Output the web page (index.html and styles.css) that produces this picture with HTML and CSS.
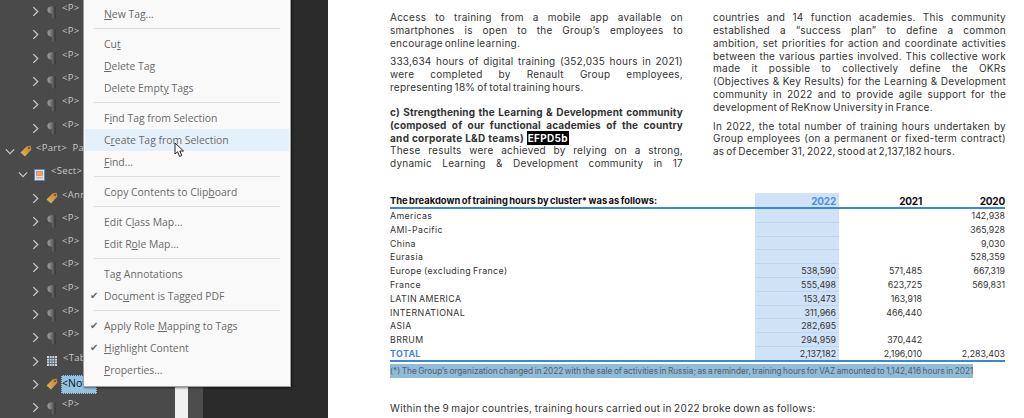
FILE: index.html
```html
<!DOCTYPE html>
<html lang="en">
<head>
    <meta charset="UTF-8">
    <title>Tags panel</title>
    <link rel="stylesheet" href="styles.css">
</head>
<body>
    <svg class="defs" width="0" height="0">
        <defs>
            <linearGradient id="stump" x1="0" x2="1" y1="0" y2="0">
                <stop offset="0" stop-color="#a0a0a0"/>
                <stop offset="0.55" stop-color="#6e6e6e"/>
                <stop offset="1" stop-color="#333"/>
            </linearGradient>
            <linearGradient id="tagfill" x1="0" x2="1" y1="1" y2="0">
                <stop offset="0" stop-color="#e9b65c"/>
                <stop offset="1" stop-color="#b9802c"/>
            </linearGradient>
            <symbol id="right" viewBox="0 0 8 12"><path d="M1.5 1 L6.5 6 L1.5 11" fill="none" stroke="#c8c8c8" stroke-width="1.5"/></symbol>
            <symbol id="down" viewBox="0 0 12 8"><path d="M1 1.5 L6 6.5 L11 1.5" fill="none" stroke="#c8c8c8" stroke-width="1.5"/></symbol>
            <symbol id="para" viewBox="0 0 10 14"><path d="M0.5 4.5 C0.5 1.5 3 0.5 5.5 0.5 L9.5 0.5 L9.5 14 L5.5 14 L5.5 9 C2.5 9 0.5 7.5 0.5 4.5 Z" fill="url(#stump)"/></symbol>
            <symbol id="tag" viewBox="0 0 12 12"><path d="M0.5 7.5 L6.5 1.5 L10.5 0.5 L11.5 4.5 L5 11.5 Z" fill="url(#tagfill)"/><circle cx="9" cy="3" r="0.9" fill="#5b4a2a"/></symbol>
            <symbol id="sect" viewBox="0 0 12 13"><rect x="0.5" y="0.5" width="11" height="12" fill="#d8e6f2" stroke="#4a8fd0"/><rect x="2.5" y="2.5" width="7" height="4.5" fill="#f0a070" stroke="#d8703a" stroke-width="0.6"/><rect x="2.5" y="8.5" width="7" height="2" fill="#e8b090"/></symbol>
            <symbol id="grid" viewBox="0 0 10 10"><rect width="10" height="10" fill="#c8d4de"/><path d="M0 2.5H10M0 5H10M0 7.5H10M2.5 0V10M5 0V10M7.5 0V10" stroke="#54606a" stroke-width="0.8"/></symbol>
        </defs>
    </svg>

    <div class="sidebar">
        <div class="tree">
            <div class="row deep"><svg class="chev"><use href="#right"/></svg><svg class="ico"><use href="#para"/></svg><span class="lbl">&lt;P&gt;</span></div>
            <div class="row deep"><svg class="chev"><use href="#right"/></svg><svg class="ico"><use href="#para"/></svg><span class="lbl">&lt;P&gt;</span></div>
            <div class="row deep"><svg class="chev"><use href="#right"/></svg><svg class="ico"><use href="#para"/></svg><span class="lbl">&lt;P&gt;</span></div>
            <div class="row deep"><svg class="chev"><use href="#right"/></svg><svg class="ico"><use href="#para"/></svg><span class="lbl">&lt;P&gt;</span></div>
            <div class="row deep"><svg class="chev"><use href="#right"/></svg><svg class="ico"><use href="#para"/></svg><span class="lbl">&lt;P&gt;</span></div>
            <div class="row deep"><svg class="chev"><use href="#right"/></svg><svg class="ico"><use href="#para"/></svg><span class="lbl">&lt;P&gt;</span></div>
            <div class="row top"><svg class="chev-d"><use href="#down"/></svg><svg class="tagico"><use href="#tag"/></svg><span class="lbl">&lt;Part&gt;&nbsp; Pag</span></div>
            <div class="row mid"><svg class="chev-d"><use href="#down"/></svg><svg class="sectico"><use href="#sect"/></svg><span class="lbl">&lt;Sect&gt; 2</span></div>
            <div class="row deep"><svg class="chev"><use href="#right"/></svg><svg class="tagico"><use href="#tag"/></svg><span class="lbl">&lt;Ann</span></div>
            <div class="row deep"><svg class="chev"><use href="#right"/></svg><svg class="ico"><use href="#para"/></svg><span class="lbl">&lt;P&gt;</span></div>
            <div class="row deep"><svg class="chev"><use href="#right"/></svg><svg class="ico"><use href="#para"/></svg><span class="lbl">&lt;P&gt;</span></div>
            <div class="row deep"><svg class="chev"><use href="#right"/></svg><svg class="ico"><use href="#para"/></svg><span class="lbl">&lt;P&gt;</span></div>
            <div class="row deep"><svg class="chev"><use href="#right"/></svg><svg class="ico"><use href="#para"/></svg><span class="lbl">&lt;P&gt;</span></div>
            <div class="row deep"><svg class="chev"><use href="#right"/></svg><svg class="ico"><use href="#para"/></svg><span class="lbl">&lt;P&gt;</span></div>
            <div class="row deep"><svg class="chev"><use href="#right"/></svg><svg class="ico"><use href="#para"/></svg><span class="lbl">&lt;P&gt;</span></div>
            <div class="row deep"><svg class="chev"><use href="#right"/></svg><svg class="gridico"><use href="#grid"/></svg><span class="lbl">&lt;Tab</span></div>
            <div class="row deep"><svg class="chev"><use href="#right"/></svg><svg class="tagico"><use href="#tag"/></svg><span class="lbl selected">&lt;Not</span></div>
            <div class="row deep"><svg class="chev"><use href="#right"/></svg><svg class="ico"><use href="#para"/></svg><span class="lbl">&lt;P&gt;</span></div>
        </div>
        <div class="scrollbar"></div>
        <div class="strip"></div>
    </div>

    <div class="viewer">
        <div class="page">
            <div class="columns">
                <div class="col">
                    <p><span class="j">Access to training from a mobile app available on</span><span class="j">smartphones is open to the Group’s employees to</span><span>encourage online learning.</span></p>
                    <p><span class="j">333,634 hours of digital training (352,035 hours in 2021)</span><span class="j">were completed by Renault Group employees,</span><span>representing 18% of total training hours.</span></p>
                    <p class="lead"><b class="j">c) Strengthening the Learning &amp; Development community</b><b class="j">(composed of our functional academies of the country</b><b class="tail">and corporate L&amp;D teams) <i class="marked">EFPD5b</i></b><span class="j">These results were achieved by relying on a strong,</span><span class="j">dynamic Learning &amp; Development community in 17</span></p>
                </div>
                <div class="col">
                    <p><span class="j">countries and 14 function academies. This community</span><span class="j">established a “success plan” to define a common</span><span class="j">ambition, set priorities for action and coordinate activities</span><span class="j">between the various parties involved. This collective work</span><span class="j">made it possible to collectively define the OKRs</span><span class="j">(Objectives &amp; Key Results) for the Learning &amp; Development</span><span class="j">community in 2022 and to provide agile support for the</span><span>development of ReKnow University in France.</span></p>
                    <p><span class="j">In 2022, the total number of training hours undertaken by</span><span class="j">Group employees (on a permanent or fixed-term contract)</span><span>as of December 31, 2022, stood at 2,137,182 hours.</span></p>
                </div>
            </div>

            <table class="hours">
                <thead>
                    <tr><th class="name">The breakdown of training hours by cluster* was as follows:</th><th class="y22">2022</th><th>2021</th><th>2020</th></tr>
                </thead>
                <tbody>
                    <tr><td class="name">Americas</td><td class="y22"></td><td></td><td>142,938</td></tr>
                    <tr><td class="name">AMI-Pacific</td><td class="y22"></td><td></td><td>365,928</td></tr>
                    <tr><td class="name">China</td><td class="y22"></td><td></td><td>9,030</td></tr>
                    <tr><td class="name">Eurasia</td><td class="y22"></td><td></td><td>528,359</td></tr>
                    <tr><td class="name">Europe (excluding France)</td><td class="y22">538,590</td><td>571,485</td><td>667,319</td></tr>
                    <tr><td class="name">France</td><td class="y22">555,498</td><td>623,725</td><td>569,831</td></tr>
                    <tr><td class="name">LATIN AMERICA</td><td class="y22">153,473</td><td>163,918</td><td></td></tr>
                    <tr><td class="name">INTERNATIONAL</td><td class="y22">311,966</td><td>466,440</td><td></td></tr>
                    <tr><td class="name">ASIA</td><td class="y22">282,695</td><td></td><td></td></tr>
                    <tr><td class="name">BRRUM</td><td class="y22">294,959</td><td>370,442</td><td></td></tr>
                    <tr class="total"><td class="name">TOTAL</td><td class="y22">2,137,182</td><td>2,196,010</td><td>2,283,403</td></tr>
                </tbody>
            </table>
            <div class="note">(*) The Group’s organization changed in 2022 with the sale of activities in Russia; as a reminder, training hours for VAZ amounted to 1,142,416 hours in 2021</div>
            <p class="after">Within the 9 major countries, training hours carried out in 2022 broke down as follows:</p>
        </div>
    </div>

    <div class="menu">
        <div class="item"><u>N</u>ew Tag...</div>
        <div class="sep"></div>
        <div class="item">Cu<u>t</u></div>
        <div class="item"><u>D</u>elete Tag</div>
        <div class="item">Delete Empt<u>y</u> Tags</div>
        <div class="sep"></div>
        <div class="item">F<u>i</u>nd Tag from Selection</div>
        <div class="item hover">C<u>r</u>eate Tag from Selection</div>
        <div class="item"><u>F</u>ind...</div>
        <div class="sep"></div>
        <div class="item">Copy Contents to Clip<u>b</u>oard</div>
        <div class="sep"></div>
        <div class="item">Edit C<u>l</u>ass Map...</div>
        <div class="item">Edit R<u>o</u>le Map...</div>
        <div class="sep"></div>
        <div class="item">Ta<u>g</u> Annotations</div>
        <div class="item checked">Doc<u>u</u>ment is Tagged PDF</div>
        <div class="sep"></div>
        <div class="item checked">Apply Role <u>M</u>apping to Tags</div>
        <div class="item checked"><u>H</u>ighlight Content</div>
        <div class="item"><u>P</u>roperties...</div>
    </div>

    <svg class="cursor" viewBox="0 0 11 16"><path d="M1 1 L1 12 L3.6 9.8 L5.6 14.5 L7.8 13.5 L5.8 9 L9.5 9 Z" fill="#fff" stroke="#222" stroke-width="1"/></svg>
</body>
</html>
```

FILE: styles.css
```css
html, body {
    height: 100%;
}
body {
    margin: 0;
    display: flex;
    overflow: hidden;
    background-color: #2b2b2b;
    position: relative;
}
.defs {
    position: absolute;
}

/* left panel */
.sidebar {
    width: 203px;
    display: flex;
    flex-shrink: 0;
    background-color: #4a4a4a;
}
.tree {
    width: 175px;
    overflow: hidden;
}
.scrollbar {
    width: 13px;
    background-color: #f0f0f0;
}
.strip {
    width: 15px;
    background-color: #4d4d4d;
}
.row {
    height: 23.3px;
    display: flex;
    align-items: center;
    white-space: nowrap;
}
.row.deep {
    padding-left: 32px;
}
.row.top {
    padding-left: 5px;
}
.row.mid {
    padding-left: 18px;
}
.chev {
    width: 7px;
    height: 11px;
    margin-right: 8px;
    flex-shrink: 0;
}
.chev-d {
    width: 10px;
    height: 7px;
    margin-right: 6px;
    flex-shrink: 0;
}
.ico {
    width: 9px;
    height: 14px;
    margin-right: 6px;
    flex-shrink: 0;
}
.tagico {
    width: 12px;
    height: 12px;
    margin-right: 4px;
    margin-left: -1px;
    flex-shrink: 0;
}
.sectico {
    width: 11px;
    height: 12px;
    margin-right: 6px;
    flex-shrink: 0;
}
.gridico {
    width: 10px;
    height: 10px;
    margin-right: 6px;
    flex-shrink: 0;
}
.lbl {
    font-family: "Open Sans", sans-serif;
    font-size: 9.5px;
    color: #c8c8c8;
    margin-bottom: 8px;
    letter-spacing: 0.3px;
}
.lbl.selected {
    font-size: 10.5px;
    line-height: 15px;
    color: #101010;
    background-color: #93c2e2;
    border: 1px dotted #555;
    width: 34px;
    height: 17px;
    margin-bottom: 0;
    margin-left: -1px;
    letter-spacing: 0;
    overflow: hidden;
}

/* context menu */
.menu {
    position: absolute;
    left: 83px;
    top: -3px;
    width: 204px;
    padding: 5px 1px;
    background-color: #f9f9f9;
    border: 1px solid #a0a0a0;
    box-shadow: 1px 1px 2px rgba(0,0,0,0.5);
    font-family: "Open Sans", sans-serif;
    font-size: 10.4px;
    color: #6a6a6a;
}
.item {
    height: 22px;
    line-height: 22px;
    padding-left: 19px;
    position: relative;
}
.item.hover {
    background-color: #e5f1fa;
}
.item.checked::before {
    content: "\2714";
    position: absolute;
    left: 5px;
    font-family: "DejaVu Sans", sans-serif;
    font-size: 10px;
    color: #666;
}
.sep {
    height: 1px;
    margin: 3px 9px 4px 9px;
    background-color: #dedede;
}
.cursor {
    position: absolute;
    left: 174px;
    top: 142px;
    width: 11px;
    height: 16px;
}

/* document */
.viewer {
    flex: 1;
    padding-left: 125px;
    min-width: 0;
}
.page {
    height: 100%;
    background-color: #fff;
    padding: 11px 19px 0 62px;
    box-sizing: border-box;
    font-family: Inter, sans-serif;
    font-size: 10px;
    line-height: 12.85px;
    color: #333;
    word-spacing: -0.8px;
}
.columns {
    display: flex;
    gap: 30px;
    height: 182px;
}
.col {
    width: 293px;
    flex-shrink: 0;
    letter-spacing: 0.25px;
    word-spacing: -1.2px;
}
.col p {
    margin: 0 0 5.8px 0;
}
.col p.lead {
    margin-top: 12px;
}
.col span, .col b {
    display: block;
    white-space: nowrap;
}
.col b {
    font-size: 10px;
    letter-spacing: 0.15px;
    word-spacing: -1px;
}
.col b.tail {
    letter-spacing: 0.3px;
    word-spacing: 0;
}
.col .j {
    text-align: justify;
    text-align-last: justify;
}
.marked {
    font-style: normal;
    background-color: #000;
    color: #fff;
    padding: 1px 1px;
}
.hours {
    width: 615px;
    border-collapse: collapse;
    table-layout: fixed;
}
.hours th {
    height: 14px;
    padding: 0;
    width: 83px;
    font-size: 10px;
    line-height: 12px;
    letter-spacing: -0.2px;
    vertical-align: bottom;
    text-align: right;
    font-weight: 700;
    color: #111;
    border-bottom: 2px solid #3f86d8;
}
.hours th.name {
    width: 365px;
    font-size: 9.4px;
    letter-spacing: 0;
    text-align: left;
}
.hours th.y22 {
    width: 81px;
    color: #4f8fe0;
}
.hours td {
    height: 11.8px;
    padding: 1px 0 0 0;
    font-size: 8.8px;
    line-height: 11.8px;
    text-align: right;
}
.hours td.name {
    letter-spacing: 0.4px;
    text-align: left;
}
.y22 {
    padding-right: 3px !important;
    background-color: #cfe2f6;
    border-bottom: 1px solid #bcd6f0;
}
.total td {
    border-bottom: 2px solid #3f86d8;
}
.total td.name {
    color: #3f86d8;
    font-weight: 700;
}
.note {
    width: 583px;
    margin-top: 2px;
    height: 14px;
    line-height: 14px;
    font-size: 8.25px;
    background-color: #90bcd8;
    color: #4f6070;
    white-space: nowrap;
    overflow: hidden;
}
.after {
    margin: 24px 0 0 0;
    font-size: 10px;
    letter-spacing: 0.33px;
}
```
